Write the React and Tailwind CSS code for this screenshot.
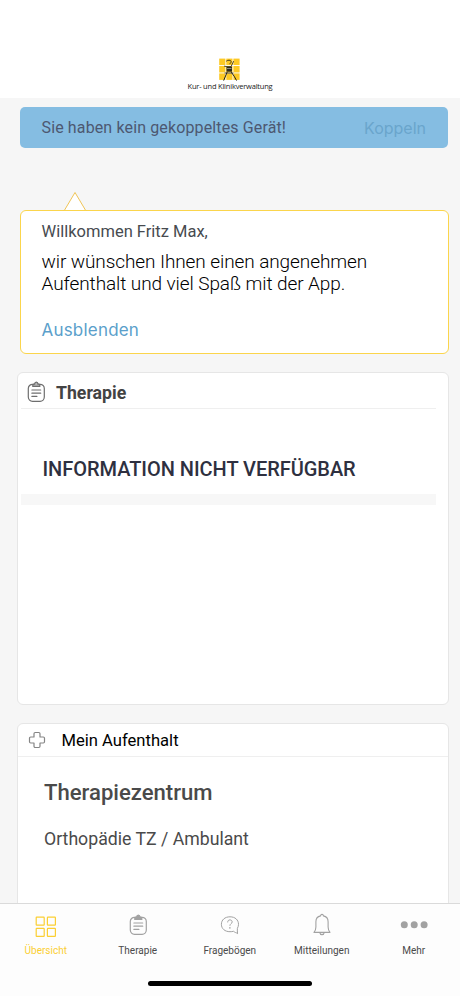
import React, { useState } from "react";

const ClipboardIcon = ({ className, filled = false }) => (
  <svg viewBox="0 0 20 24" className={className} fill="none" stroke="currentColor" strokeWidth="1.2" strokeLinecap="round">
    <rect x="2.300" y="4.3" width="16" height="17" rx="4.2" />
    <path
      d="M6.800 6.300V5c0-.6.5-.9 1-.9h.8c.1-1.300.8-2 1.700-2s1.600.7 1.700 2h.8c.5 0 1 .3 1 .9v1.300z"
      fill={filled ? "currentColor" : "#b5b5b5"}
    />
    <path d="M5.900 10h8.800M5.900 13.200h8.800M5.900 16.400h5" />
  </svg>
);

const CrossIcon = ({ className }) => (
  <svg viewBox="0 0 18 18" className={className} fill="none" stroke="currentColor" strokeWidth="1.2" strokeLinejoin="round">
    <path d="M7.200 1.500h3.600c.7 0 1.200.5 1.200 1.200V6h3.300c.7 0 1.200.5 1.200 1.200v3.600c0 .7-.5 1.200-1.200 1.200H12v3.300c0 .7-.5 1.200-1.200 1.200H7.200c-.7 0-1.200-.5-1.200-1.200V12H2.700c-.7 0-1.200-.5-1.200-1.200V7.200C1.500 6.500 2 6 2.700 6H6V2.700c0-.7.5-1.200 1.200-1.200z" />
  </svg>
);

const GridIcon = () => (
  <svg viewBox="0 0 22 22" className="mt-[3px] h-[22px] w-[22px]" fill="none" stroke="currentColor" strokeWidth="1.200">
    <rect x="1.200" y="1.200" width="8" height="8" rx="0.500" />
    <rect x="12.400" y="1.200" width="8" height="8" rx="0.500" />
    <rect x="1.200" y="12.400" width="8" height="8" rx="0.500" />
    <rect x="12.400" y="12.400" width="8" height="8" rx="0.500" />
  </svg>
);

const QuestionIcon = () => (
  <svg viewBox="0 0 20 20" className="h-5 w-5" fill="none" stroke="currentColor" strokeWidth="1" strokeLinecap="round" strokeLinejoin="round">
    <path d="M17.500 18.200c-1.700-.4-2.900-1-4-1.900-1.100.3-2.300.4-3.500.4-5.100 0-8.600-3-8.600-7.400s3.500-7.500 8.600-7.500 8.500 3.100 8.500 7.500c0 1.500-.4 2.900-1.100 4-.1 1.800-.1 3.400.1 4.900z" />
    <path d="M7.700 7c0-1.300.9-2.100 2.200-2.100s2.300.8 2.300 2c0 1.700-2.300 1.800-2.300 3.500" />
    <path d="M9.900 12.700v.2" strokeWidth="1.500" />
  </svg>
);

const BellIcon = () => (
  <svg viewBox="0 0 18 24" className="h-6 w-[18px]" fill="none" stroke="currentColor" strokeWidth="1.100" strokeLinejoin="round">
    <path d="M7.600 2.900C7.500 2 8.100 1.400 9 1.400s1.500.6 1.400 1.500c3.100.6 4.700 2.900 4.700 5.900v5.300c0 2.100.4 3.500 1.900 5.300H1c1.500-1.800 1.900-3.200 1.900-5.300V8.800c0-3 1.600-5.300 4.700-5.900z" />
    <path d="M6.700 19.400c.2 1.500 1 2.200 2.300 2.200s2.100-.7 2.300-2.200" />
  </svg>
);

const DotsIcon = () => (
  <svg viewBox="0 0 28 8" className="h-2 w-7" fill="currentColor">
    <circle cx="4.300" cy="3.800" r="3.500" />
    <circle cx="14.200" cy="3.800" r="3.500" />
    <circle cx="24.100" cy="3.800" r="3.500" />
  </svg>
);

const Logo = () => (
  <svg viewBox="0 0 22 25" className="h-[25px] w-[22px]">
    <g fill="#fdc923">
      <rect x="0.200" y="1.600" width="6.200" height="6.500" />
      <rect x="7.300" y="1.600" width="6.200" height="6.500" />
      <rect x="14.400" y="1.600" width="6.200" height="6.500" />
      <rect x="0.200" y="9" width="6.200" height="6.500" />
      <rect x="7.300" y="9" width="6.200" height="6.500" />
      <rect x="14.400" y="9" width="6.200" height="6.500" />
      <rect x="0.200" y="16.400" width="6.200" height="6.500" />
      <rect x="7.300" y="16.400" width="6.200" height="6.500" />
      <rect x="14.400" y="16.400" width="6.200" height="6.500" />
    </g>
    <g fill="none" stroke="#222018" strokeLinecap="round">
      <path d="M7.500 4c1.500-1.200 3.800-1 4.600.2.600 1.100-.3 1.900-1.300 2.400" strokeWidth="0.800" />
      <path d="M5.500 9.200l2.500.5h4L14.500 4.500" strokeWidth="0.800" />
      <path d="M8 15.500l-3.200 7.700M12.500 15.500c1.800 2.300 3.700 5 4.900 7.700" strokeWidth="1" />
      <path d="M6 16h8" strokeWidth="0.800" />
    </g>
    <path d="M7.500 9.700h5.500v5H7.500z" fill="#2d2a1d" />
    <path d="M8 11.500h4.500" stroke="#b8b3a0" strokeWidth="0.700" />
  </svg>
);

const tabs = [
  { label: "Übersicht", icon: <GridIcon />, active: true },
  { label: "Therapie", icon: <ClipboardIcon className="h-6 w-5" filled /> },
  { label: "Fragebögen", icon: <QuestionIcon /> },
  { label: "Mitteilungen", icon: <BellIcon /> },
  { label: "Mehr", icon: <DotsIcon /> },
];

const App = () => {
  const [showWelcome, setShowWelcome] = useState(true);

  return (
    <div className="flex h-[996px] w-[460px] flex-col overflow-hidden bg-[#f6f6f6] font-['Roboto',sans-serif]">
      <header className="flex h-[98px] shrink-0 flex-col items-center bg-white pt-[57px]">
        <Logo />
        <span className="-mt-px font-['Open_Sans',sans-serif] text-[7.500px] leading-[10px] tracking-[-0.200px] whitespace-nowrap text-[#222]">
          Kur- und Klinikverwaltung
        </span>
      </header>

      <main className="flex min-h-0 flex-1 flex-col overflow-hidden">
        <div className="mt-[9px] ml-5 flex h-[41px] w-[428px] shrink-0 items-center justify-between rounded-[5px] bg-[#85bde2] pr-[22px] pl-[21.500px]">
          <span className="text-[16px] tracking-[0.130px] text-[#4d5871]">Sie haben kein gekoppeltes Gerät!</span>
          <button className="font-['Inter','Roboto',sans-serif] text-[16px] text-[#6aa5cc]">Koppeln</button>
        </div>

        {showWelcome && (
          <section className="relative mt-[62px] ml-5 h-[144px] w-[429px] shrink-0 rounded-[6px] border-[1.500px] border-[#fbd54c] bg-white pt-[11px] pl-[20.500px]">
            <svg viewBox="0 0 24 20" className="absolute -top-[20px] left-[42px] h-5 w-6">
              <path d="M1 20L12 1.500L23 20" fill="#ffffff" stroke="#efc456" strokeWidth="1" />
              <path d="M1 19.500H23" stroke="#fbd54c" strokeWidth="1" />
            </svg>
            <p className="text-[16.500px] leading-5 text-[#474b50]">Willkommen Fritz Max,</p>
            <p className="mt-[9px] text-[19px] leading-[22px] font-light tracking-[-0.090px] text-black">
              wir wünschen Ihnen einen angenehmen
              <br />
              Aufenthalt und viel Spaß mit der App.
            </p>
            <button
              onClick={() => setShowWelcome(false)}
              className="mt-[23px] block font-['Inter','Roboto',sans-serif] text-[17px] leading-6 tracking-[0.200px] text-[#5b9fcb]"
            >
              Ausblenden
            </button>
          </section>
        )}

        <section className="mt-[18px] ml-[17px] h-[333px] w-[432px] shrink-0 rounded-[6px] border border-[#e6e6e6] bg-white">
          <div className="mr-3 ml-[3px] flex h-9 items-center border-b border-[#efefef] pt-[2px] pl-[5px]">
            <ClipboardIcon className="h-6 w-5 text-[#6e6e6e]" />
            <h2 className="mt-[2px] ml-[10px] text-[17.700px] leading-6 font-bold text-[#434343]">Therapie</h2>
          </div>
          <div className="mr-3 ml-[3px] flex h-[85px] items-end pb-[13px] pl-[21.500px]">
            <p className="text-[20px] leading-6 font-medium tracking-[-0.040px] text-[#2e3040]">INFORMATION NICHT VERFÜGBAR</p>
          </div>
          <div className="mr-3 ml-[3px] h-[11px] bg-[#f7f7f7]" />
        </section>

        <section className="mt-[18px] ml-[17px] h-[240px] w-[432px] shrink-0 rounded-[6px] border border-[#e6e6e6] bg-white">
          <div className="flex h-[33px] items-center border-b border-[#efefef] pl-[10px]">
            <CrossIcon className="h-[18px] w-[18px] text-[#858585]" />
            <h2 className="mt-[2px] ml-[15.500px] text-[16.600px] leading-6 text-black">Mein Aufenthalt</h2>
          </div>
          <h3 className="mt-[21px] ml-[26px] text-[22.100px] leading-7 font-medium text-[#4a4a4a]">Therapiezentrum</h3>
          <p className="mt-[21px] ml-[26px] text-[17.700px] leading-6 text-[#4a4a4a]">Orthopädie TZ / Ambulant</p>
        </section>
      </main>

      <nav className="flex h-[93px] shrink-0 flex-col items-center border-t border-[#dadada] bg-[#fdfdfd]">
        <div className="flex w-full">
          {tabs.map((tab) => (
            <button
              key={tab.label}
              className={`flex flex-1 flex-col items-center pt-[9px] pr-[0.500px] ${tab.active ? "text-[#fbcf33]" : "text-[#a2a2a2]"}`}
            >
              <span className="flex h-6 items-center">{tab.icon}</span>
              <span className={`mt-[7px] text-[10px] leading-[14px] ${tab.active ? "text-[#fbcf33]" : "text-[#4a4a4a]"}`}>
                {tab.label}
              </span>
            </button>
          ))}
        </div>
        <div className="mt-[23px] h-[5px] w-[164px] rounded-full bg-black" />
      </nav>
    </div>
  );
};

export default App;
